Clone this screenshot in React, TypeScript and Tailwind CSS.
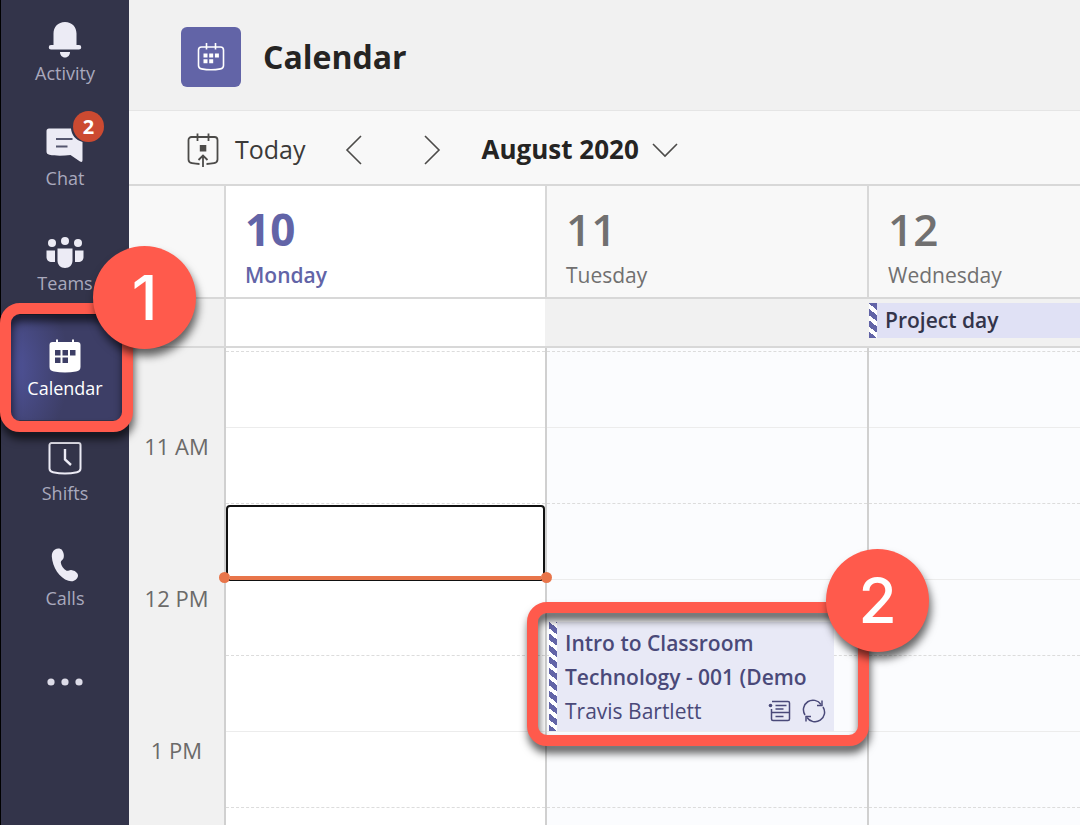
import type { ReactNode } from 'react'

const HATCH =
  'w-2 shrink-0 bg-[repeating-linear-gradient(38deg,#6264a7_0px,#6264a7_5px,#ffffff_5px,#ffffff_9px)]'

function BellIcon() {
  return (
    <svg width="36" height="40" viewBox="0 0 36 40" fill="#ecebf5">
      <path d="M18 2C11 2 6.500 7 6.500 13.500V25H4a2 2 0 0 0 0 4.500h28a2 2 0 0 0 0-4.500h-2.500V13.500C29.500 7 25 2 18 2z" />
      <path d="M13 32h10c0 3-2 5.500-5 5.500s-5-2.500-5-5.500z" />
    </svg>
  )
}

function ChatIcon() {
  return (
    <svg width="38" height="40" viewBox="0 0 38 40">
      <path
        d="M3 3.500h22c.5 6.500 4.500 11.500 11.500 13.500v18c0 2-1 2.500-2.500 1.500l-9.500-6.500C17 31 9 31 3.500 29.800 1.500 29.300.500 28.500.500 26.500V6c0-1.600.9-2.500 2.500-2.500z"
        fill="#ecebf5"
      />
      <path d="M10 14h16.500M10 21.500h11.500" stroke="#55566f" strokeWidth="2.200" fill="none" />
    </svg>
  )
}

function TeamsIcon() {
  return (
    <svg width="40" height="40" viewBox="0 0 40 40" fill="#ecebf5">
      <circle cx="7" cy="13" r="4" />
      <circle cx="20" cy="11" r="4" />
      <circle cx="33" cy="13" r="4" />
      <path d="M1.500 20.500h8.500V32H7c-3.500 0-5.500-2-5.500-5v-6.500z" />
      <path d="M30 20.500h8.500V27c0 3-2 5-5.500 5h-3V20.500z" />
      <path d="M12.500 18.500h15v12c0 4.500-3 7.500-7.500 7.500s-7.500-3-7.500-7.500v-12z" />
    </svg>
  )
}

function CalendarFilledIcon() {
  return (
    <svg width="36" height="40" viewBox="0 0 36 40">
      <path d="M10 4.500v5M26 4.500v5" stroke="#fff" strokeWidth="2" />
      <path
        d="M5.500 7h25a3 3 0 0 1 3 3v22c0 3-2 4-4.500 4.500-7 1.200-15 1.200-22 0-2.500-.5-4.500-1.500-4.500-4.500V10a3 3 0 0 1 3-3z"
        fill="#fff"
      />
      <path
        d="M8 15h5.500v5.500H8zM15.500 15H21v5.500h-5.500zM23 15h5.500v5.500H23zM8 22.500h5.500V28H8zM15.500 22.500H21V28h-5.500z"
        fill="#3d3e66"
      />
    </svg>
  )
}

function ShiftsIcon() {
  return (
    <svg width="36" height="40" viewBox="0 0 36 40" fill="none" stroke="#ecebf5">
      <path
        d="M4.500 3h27a2 2 0 0 1 2 2v23.500c0 2.500-1 3.200-3.500 3.700-8 1.600-16 1.600-24 0-2.500-.5-3.500-1.200-3.500-3.700V5a2 2 0 0 1 2-2z"
        strokeWidth="2"
      />
      <path d="M18 9v10.500l6 5.500" strokeWidth="2.400" />
    </svg>
  )
}

function PhoneIcon() {
  return (
    <svg width="36" height="40" viewBox="0 0 36 40" fill="#ecebf5">
      <path d="M8 4.500c2-1.500 5.500-1.500 7 .5 1.800 2.500 2.300 5.500 1.600 8-.5 1.800-3 2.600-2.800 4.500.4 3.500 2.800 6.500 5.800 8.200 1.500.7 2.700-1 4.500-.8 2.600.3 5 1.500 6.300 3.500 1 1.500.8 3.500-.5 5-2 2.500-5 3.500-8.500 2.400C12.500 33 5.500 22.500 4.800 11.500 4.700 8.500 5.600 6 8 4.500z" />
    </svg>
  )
}

function CalendarOutlineIcon() {
  return (
    <svg width="32" height="32" viewBox="0 0 32 32" fill="none" stroke="#fff" strokeWidth="1.600">
      <path d="M6.500 6h19a3 3 0 0 1 3 3v15.500c0 2.200-1 3-3 3.400-6.300 1.200-12.700 1.200-19 0-2-.4-3-1.200-3-3.400V9a3 3 0 0 1 3-3z" />
      <path d="M11.500 2v6.500M20.500 2v6.500" />
      <path
        d="M8.500 12.500h4v4h-4zM14.200 12.500h4v4h-4zM19.900 12.500h4v4h-4zM8.500 18.300h4v4h-4zM14.200 18.300h4v4h-4z"
        fill="#fff"
        stroke="none"
      />
    </svg>
  )
}

function TodayIcon() {
  return (
    <svg width="32" height="36" viewBox="0 0 32 36" fill="none" stroke="#4c4b49" strokeWidth="1.800">
      <path d="M12.500 32c-2.500 0-5-.3-7.500-.8-2.500-.4-3.500-1.200-3.500-3.700V8a3 3 0 0 1 3-3h23a3 3 0 0 1 3 3v19.500c0 2.500-1 3.300-3.500 3.700-2.500.5-5 .8-7.500.8" />
      <path d="M10.500 1.500v7.500M21.500 1.500v7.500" />
      <path d="M16 35V24M11.500 28l4.500-4.500 4.500 4.500" />
      <path d="M12.800 13h6.500v6.500h-6.500z" fill="#4c4b49" stroke="none" />
    </svg>
  )
}

function Chevron({ d, width = 20, height = 30 }: { d: string; width?: number; height?: number }) {
  return (
    <svg width={width} height={height} viewBox={`0 0 ${width} ${height}`} fill="none" stroke="#4c4b49" strokeWidth="1.600">
      <path d={d} />
    </svg>
  )
}

function AgendaIcon() {
  return (
    <svg width="24" height="24" viewBox="0 0 24 24" fill="none" stroke="#4a4979" strokeWidth="1.500">
      <path d="M4 2.500h16a1.500 1.500 0 0 1 1.500 1.500v16a1.500 1.500 0 0 1-1.500 1.500H5A1.500 1.500 0 0 1 3.500 20V10" />
      <path d="M7.500 6.500h11M7.500 10h8M3.500 13.500h18M7.500 17.500h8" />
      <circle cx="2.500" cy="6.500" r="1.800" fill="#4a4979" stroke="none" />
    </svg>
  )
}

function RepeatIcon() {
  return (
    <svg width="24" height="24" viewBox="0 0 24 24" fill="none" stroke="#4a4979" strokeWidth="1.500">
      <path d="M3 16A9.300 9.300 0 0 1 19 5.500M21 8A9.300 9.300 0 0 1 5 18.500" />
      <path d="M20 1.500v5h-5M4 22.500v-5h5" />
    </svg>
  )
}

function Callout({ n, className }: { n: number; className: string }) {
  return (
    <span
      className={`absolute z-20 flex size-[103px] items-center justify-center rounded-full bg-[#ff5a4c] font-['Inter','Liberation_Sans',sans-serif] text-[62px] leading-none font-medium text-white drop-shadow-[2px_7px_4px_rgba(0,0,0,0.6)] ${className}`}
    >
      {n}
    </span>
  )
}

function Highlight({ className }: { className: string }) {
  return (
    <span
      className={`pointer-events-none absolute z-10 rounded-[20px] border-11 border-[#ff5a4c] drop-shadow-[1px_7px_4px_rgba(0,0,0,0.65)] ${className}`}
    />
  )
}

type NavEntry = { label: string; icon: ReactNode; badge?: number; active?: boolean }

const nav: NavEntry[] = [
  { label: 'Activity', icon: <BellIcon /> },
  { label: 'Chat', icon: <ChatIcon />, badge: 2 },
  { label: 'Teams', icon: <TeamsIcon /> },
  { label: 'Calendar', icon: <CalendarFilledIcon />, active: true },
  { label: 'Shifts', icon: <ShiftsIcon /> },
  { label: 'Calls', icon: <PhoneIcon /> },
]

function NavItem({ label, icon, badge, active }: NavEntry) {
  return (
    <div className="relative">
      <button
        className={`flex h-[105px] w-full flex-col items-center pt-5 text-lg/[26px] ${
          active
            ? 'bg-[radial-gradient(ellipse_60px_90px_at_8px_50%,#50549c_0%,#3d3e66_100%)] text-white'
            : 'text-[#a9a9bd]'
        }`}
      >
        <span className="flex h-10 items-center">{icon}</span>
        {label}
      </button>
      {badge && (
        <span className="absolute top-1.5 left-[72px] flex size-[31px] items-center justify-center rounded-full bg-[#cc4a31] text-xl font-bold text-white">
          {badge}
        </span>
      )}
      {active && (
        <>
          <Highlight className="-inset-y-3 -right-1 -left-px" />
          <Callout n={1} className="-top-[69px] left-[92px]" />
        </>
      )}
    </div>
  )
}

function Sidebar() {
  return (
    <nav className="relative z-10 flex w-[129px] shrink-0 flex-col border-l border-black bg-[#33344a]">
      {nav.map((item) => (
        <NavItem key={item.label} {...item} />
      ))}
      <button aria-label="More" className="flex justify-center pt-10">
        <svg width="40" height="24" viewBox="0 0 40 24" fill="#dddce8">
          <circle cx="6" cy="12" r="3.600" />
          <circle cx="20" cy="12" r="3.600" />
          <circle cx="34" cy="12" r="3.600" />
        </svg>
      </button>
    </nav>
  )
}

const COLS = 'grid grid-cols-[95px_321fr_322fr_213fr]'

const days = [
  { date: 10, name: 'Monday', today: true },
  { date: 11, name: 'Tuesday' },
  { date: 12, name: 'Wednesday' },
]

const hours = ['11 AM', '12 PM', '1 PM']

function Slots() {
  return (
    <>
      <div className="h-[3px]" />
      {[0, 1, 2, 3, 4, 5, 6].map((i) => (
        <div
          key={i}
          className={`h-[76px] border-t ${i % 2 === 0 ? 'border-dashed border-[#dcdcdc]' : 'border-[#ececec]'}`}
        />
      ))}
    </>
  )
}

function ClassEvent() {
  return (
    <div className="absolute top-[274px] left-0.5 flex h-[109px] w-[89%] bg-[#e8e9f6] text-[#4a4979]">
      <span className={HATCH} />
      <div className="flex min-w-0 flex-1 flex-col pt-1 pl-2 text-[21px]/[34px]">
        <p className="font-semibold whitespace-nowrap">Intro to Classroom</p>
        <p className="font-semibold whitespace-nowrap">Technology - 001 (Demo</p>
        <div className="flex items-center pr-2">
          <span className="flex-1 whitespace-nowrap">Travis Bartlett</span>
          <span className="flex gap-2.5">
            <AgendaIcon />
            <RepeatIcon />
          </span>
        </div>
      </div>
    </div>
  )
}

export default function App() {
  return (
    <div className="flex h-screen overflow-hidden bg-[#f1f1f1] font-['Open_Sans','Noto_Sans',sans-serif]">
      <Sidebar />
      <main className="flex min-w-0 flex-1 flex-col">
        <header className="flex h-[111px] shrink-0 items-center gap-[22px] border-b border-[#e5e5e5] pt-1 pl-[52px]">
          <span className="flex size-15 items-center justify-center rounded-md bg-[#6264a7]">
            <CalendarOutlineIcon />
          </span>
          <h1 className="text-[32px] font-bold text-[#252423]">Calendar</h1>
        </header>

        <div className="flex h-[75px] shrink-0 items-center border-b-2 border-[#d8d8d8] bg-[#f8f8f8] pt-1 pl-[58px] text-[25px] text-[#3b3a39]">
          <button className="flex items-center gap-4">
            <TodayIcon />
            Today
          </button>
          <button aria-label="Previous week" className="ml-[38px]">
            <Chevron d="M17 1L3 15l14 14" />
          </button>
          <button aria-label="Next week" className="ml-[58px]">
            <Chevron d="M3 1l14 14L3 29" />
          </button>
          <button className="ml-10 flex items-center gap-3 text-[26px] font-bold text-[#252423]">
            August 2020
            <Chevron d="M2 2l12 12L26 2" width={28} height={16} />
          </button>
        </div>

        <div className={`${COLS} h-[113px] shrink-0 border-b-2 border-[#d8d8d8] bg-[#f8f8f8]`}>
          <div />
          {days.map((d) => (
            <div
              key={d.date}
              className={`border-l-2 border-[#d8d8d8] pt-[19px] pl-[19px] ${d.today ? 'bg-white text-[#6264a7]' : 'text-[#717070]'}`}
            >
              <div className={`text-[44px]/[48px] ${d.today ? 'font-bold' : 'font-semibold'}`}>{d.date}</div>
              <div className={`mt-1.5 text-[21px]/[32px] ${d.today ? 'font-semibold' : ''}`}>{d.name}</div>
            </div>
          ))}
        </div>

        <div className={`${COLS} h-[49px] shrink-0 border-b-2 border-[#d8d8d8]`}>
          <div />
          <div className="border-l-2 border-[#d8d8d8] bg-white" />
          <div />
          <div className="pt-1 pl-0.5">
            <div className="flex h-[35px] bg-[#e0e1f5] text-[21px]/[35px] font-semibold text-[#33344a]">
              <span className={HATCH} />
              <span className="pl-2">Project day</span>
            </div>
          </div>
        </div>

        <div className={`${COLS} min-h-0 flex-1`}>
          <div className="pt-[82px] text-center text-[22px]/[32px] text-[#6b6a69]">
            {hours.map((h) => (
              <div key={h} className="h-[152px]">
                {h}
              </div>
            ))}
          </div>
          <div className="relative border-l-2 border-[#d0d0d0] bg-white">
            <Slots />
            <div className="absolute inset-x-0 top-[157px] h-[76px] rounded-sm border-2 border-[#111] bg-white" />
            <div className="absolute -inset-x-[7px] top-[224px] z-10 flex items-center">
              <span className="size-[11px] rounded-full bg-[#e8754a]" />
              <span className="h-1 flex-1 bg-[#e8754a]" />
              <span className="size-[11px] rounded-full bg-[#e8754a]" />
            </div>
          </div>
          <div className="relative border-l-2 border-[#d0d0d0] bg-[#fbfcfe]">
            <Slots />
            <ClassEvent />
            <Highlight className="top-[254px] -right-0.5 -left-5 h-[144px]" />
            <Callout n={2} className="top-[201px] -right-[62px]" />
          </div>
          <div className="border-l-2 border-[#d0d0d0] bg-[#fbfcfe]">
            <Slots />
          </div>
        </div>
      </main>
    </div>
  )
}
